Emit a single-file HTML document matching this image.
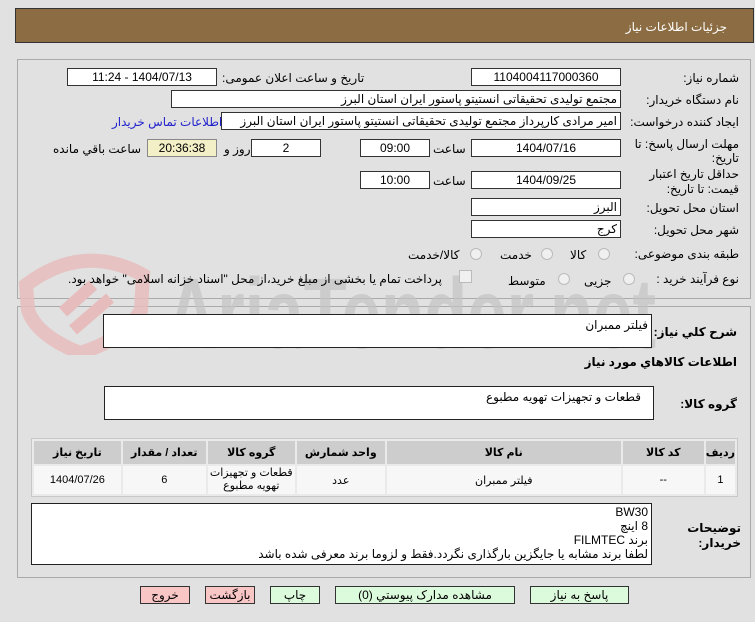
<!DOCTYPE html>
<html><head><meta charset="utf-8"><style>
*{margin:0;padding:0;box-sizing:border-box}
body{width:755px;height:622px;background:#e1e1e1;font-family:Tahoma,"Liberation Sans","DejaVu Sans",sans-serif;font-size:12px;color:#000;position:relative;overflow:hidden;direction:rtl}
.a{position:absolute;white-space:nowrap}
.box{position:absolute;background:#fff;border:1px solid #333;height:18px;line-height:16px;text-align:center;font-size:12px}
.l{position:absolute;white-space:nowrap;font-size:12px;line-height:14px}
.rad{position:absolute;width:12px;height:12px;border-radius:50%;border:1px solid #bbb;background:#f0f0f0}
table{position:absolute;left:31px;top:438px;width:707px;border-collapse:separate;border-spacing:2px;background:#eaeaea;border:1px solid #c8c8c8}
th{background:#cdcdcd;height:23px;font-size:11px;font-weight:bold;padding:0}
td{background:#f7f7f7;height:28px;text-align:center;font-size:11px;padding:0}
.btn{position:absolute;top:586px;height:18px;border:1px solid #333;text-align:center;line-height:16px;font-size:12px}
</style></head><body>
<div class="a" style="left:15px;top:8px;width:739px;height:35px;background:#8c6c42;border:1px solid #333"></div>
<div class="a" style="right:28px;top:20px;color:#fff;font-size:12px">جزئیات اطلاعات نیاز</div>

<div class="a" style="left:17px;top:59px;width:734px;height:240px;border:1px solid #aaa"></div>
<div class="a" style="left:17px;top:306px;width:734px;height:272px;border:1px solid #aaa"></div>

<!-- watermark -->
<svg class="a" style="left:18px;top:250px" width="640" height="105">
<path d="M8 35 Q65 -8 125 25 L123 60 Q105 90 62 103 Q18 85 10 60 Z" fill="none" stroke="#e6bcbc" stroke-width="14" opacity=".85"/>
<path d="M45 62 L75 35 M55 80 L92 48" stroke="#e6bcbc" stroke-width="12"/>
<text x="148" y="98" font-family="Liberation Sans,sans-serif" font-size="100" font-weight="bold" fill="#c4c4c4" opacity=".7" direction="ltr" textLength="490" lengthAdjust="spacingAndGlyphs">AriaTender.net</text>
</svg>

<div class="l" style="right:16px;top:71px">شماره نیاز:</div>
<div class="box" style="left:471px;top:68px;width:150px">1104004117000360</div>
<div class="l" style="left:222px;top:71px">تاریخ و ساعت اعلان عمومی:</div>
<div class="box" style="left:67px;top:68px;width:150px">1404/07/13 - 11:24</div>

<div class="l" style="right:16px;top:93px">نام دستگاه خریدار:</div>
<div class="box" style="left:171px;top:90px;width:450px;text-align:right;padding-right:3px">مجتمع تولیدی تحقیقاتی انستیتو پاستور ایران استان البرز</div>

<div class="l" style="right:16px;top:115px">ایجاد کننده درخواست:</div>
<div class="box" style="left:221px;top:112px;width:400px;text-align:right;padding-right:3px;overflow:hidden">امیر مرادی کارپرداز مجتمع تولیدی تحقیقاتی انستیتو پاستور ایران استان البرز</div>
<div class="l" style="left:112px;top:115px;color:#2222cc">اطلاعات تماس خریدار</div>

<div class="l" style="right:16px;top:137px;text-align:right">مهلت ارسال پاسخ: تا<br>تاریخ:</div>
<div class="box" style="left:471px;top:139px;width:150px">1404/07/16</div>
<div class="l" style="left:433px;top:142px">ساعت</div>
<div class="box" style="left:360px;top:139px;width:70px">09:00</div>
<div class="box" style="left:251px;top:139px;width:70px">2</div>
<div class="l" style="left:224px;top:142px">روز و</div>
<div class="box" style="left:147px;top:139px;width:70px;background:#f3efc6;border-color:#888">20:36:38</div>
<div class="l" style="left:53px;top:142px">ساعت باقي مانده</div>

<div class="l" style="right:16px;top:167px;text-align:right;line-height:15px">حداقل تاریخ اعتبار<br>قیمت: تا تاریخ:</div>
<div class="box" style="left:471px;top:171px;width:150px">1404/09/25</div>
<div class="l" style="left:433px;top:174px">ساعت</div>
<div class="box" style="left:360px;top:171px;width:70px">10:00</div>

<div class="l" style="right:16px;top:201px">استان محل تحویل:</div>
<div class="box" style="left:471px;top:198px;width:150px;text-align:right;padding-right:3px">البرز</div>
<div class="l" style="right:16px;top:223px">شهر محل تحویل:</div>
<div class="box" style="left:471px;top:220px;width:150px;text-align:right;padding-right:3px">کرج</div>

<div class="l" style="right:16px;top:247px">طبقه بندی موضوعی:</div>
<div class="rad" style="left:598px;top:248px"></div><div class="l" style="left:570px;top:248px">کالا</div>
<div class="rad" style="left:541px;top:248px"></div><div class="l" style="left:500px;top:248px">خدمت</div>
<div class="rad" style="left:470px;top:248px"></div><div class="l" style="left:408px;top:248px">کالا/خدمت</div>

<div class="l" style="right:16px;top:272px">نوع فرآیند خرید :</div>
<div class="rad" style="left:623px;top:273px"></div><div class="l" style="left:584px;top:274px">جزیی</div>
<div class="rad" style="left:558px;top:273px"></div><div class="l" style="left:508px;top:274px">متوسط</div>
<div class="a" style="left:459px;top:270px;width:13px;height:13px;border:1px solid #bbb;background:#f0f0f0"></div>
<div class="l" style="left:68px;top:272px">پرداخت تمام یا بخشی از مبلغ خرید،از محل "اسناد خزانه اسلامی" خواهد بود.</div>

<div class="l" style="right:18px;top:325px;font-weight:bold">شرح كلي نياز:</div>
<div class="a" style="left:103px;top:314px;width:549px;height:34px;background:#fff;border:1px solid #222;text-align:right;padding:3px 3px;font-size:12px">فیلتر ممبران</div>
<div class="l" style="right:18px;top:355px;font-weight:bold">اطلاعات كالاهاي مورد نياز</div>
<div class="l" style="right:18px;top:397px;font-weight:bold">گروه کالا:</div>
<div class="a" style="left:104px;top:386px;width:550px;height:34px;background:#fff;border:1px solid #222;text-align:right;padding:3px 12px;font-size:12px">قطعات و تجهیزات تهویه مطبوع</div>

<table><tr><th style="width:27px">ردیف</th><th style="width:81px">کد کالا</th><th style="width:234px">نام کالا</th><th style="width:88px">واحد شمارش</th><th style="width:87px">گروه کالا</th><th style="width:83px">تعداد / مقدار</th><th>تاریخ نیاز</th></tr>
<tr><td>1</td><td>--</td><td>فیلتر ممبران</td><td>عدد</td><td style="line-height:13px">قطعات و تجهیزات<br>تهویه مطبوع</td><td>6</td><td>1404/07/26</td></tr></table>

<div class="l" style="right:14px;top:521px;font-weight:bold;line-height:15px">توضیحات<br>خریدار:</div>
<div class="a" style="left:31px;top:503px;width:621px;height:62px;background:#fff;border:1px solid #222;text-align:right;padding:1px 3px;font-size:12px;line-height:14px">BW30<br>8 اینچ<br>برند FILMTEC<br>لطفا برند مشابه یا جایگزین بارگذاری نگردد.فقط و لزوما برند معرفی شده باشد</div>

<div class="btn" style="left:140px;width:50px;background:#f9c6c6">خروج</div>
<div class="btn" style="left:205px;width:50px;background:#f9c6c6">بازگشت</div>
<div class="btn" style="left:270px;width:50px;background:#dcfadc">چاپ</div>
<div class="btn" style="left:335px;width:180px;background:#dcfadc">مشاهده مدارک پیوستي (0)</div>
<div class="btn" style="left:530px;width:99px;background:#dcfadc">پاسخ به نیاز</div>
</body></html>
